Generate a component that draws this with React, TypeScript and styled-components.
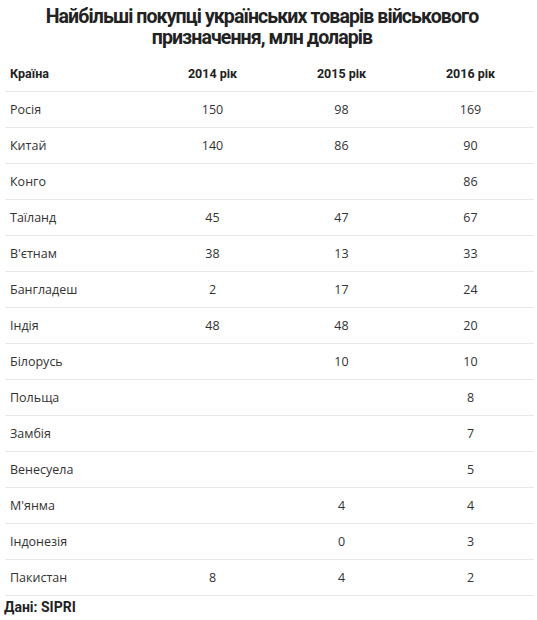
import styled, { createGlobalStyle } from "styled-components";

const GlobalStyle = createGlobalStyle`
  body {
    margin: 0;
    background: #fff;
    font-family: "Open Sans", "Noto Sans", sans-serif;
    color: #333;
  }
  * {
    box-sizing: border-box;
  }
`;

const Page = styled.div`
  width: 537px;
  padding-top: 6px;
`;

const Title = styled.h2`
  margin: 0 13px 0 0;
  font-family: Roboto, "Liberation Sans", sans-serif;
  font-size: 19.5px;
  line-height: 21px;
  font-weight: 700;
  letter-spacing: -0.9px;
  text-align: center;
  color: #222;
`;

const Table = styled.div`
  margin: 8px 0 0 5px;
  width: 529px;
`;

const Row = styled.div<{ $head?: boolean }>`
  display: grid;
  grid-template-columns: 143px repeat(3, 129px);
  height: 36px;
  align-items: center;
  border-bottom: 1px solid #e8e8e8;
  font-size: 12.5px;
  font-weight: ${(p) => (p.$head ? 700 : 400)};
  font-family: ${(p) =>
    p.$head
      ? 'Roboto, "Liberation Sans", sans-serif'
      : '"Open Sans", "Noto Sans", sans-serif'};
  color: ${(p) => (p.$head ? "#222" : "#333")};
`;

const Cell = styled.div<{ $first?: boolean }>`
  padding-left: ${(p) => (p.$first ? "5px" : "0")};
  text-align: ${(p) => (p.$first ? "left" : "center")};
`;

const Source = styled.div`
  margin: 2px 0 0 4px;
  font-family: Roboto, "Liberation Sans", sans-serif;
  font-weight: 700;
  font-size: 14px;
  line-height: 18px;
  color: #222;
`;

const rows: [string, string, string, string][] = [
  ["Росія", "150", "98", "169"],
  ["Китай", "140", "86", "90"],
  ["Конго", "", "", "86"],
  ["Таїланд", "45", "47", "67"],
  ["В'єтнам", "38", "13", "33"],
  ["Бангладеш", "2", "17", "24"],
  ["Індія", "48", "48", "20"],
  ["Білорусь", "", "10", "10"],
  ["Польща", "", "", "8"],
  ["Замбія", "", "", "7"],
  ["Венесуела", "", "", "5"],
  ["М'янма", "", "4", "4"],
  ["Індонезія", "", "0", "3"],
  ["Пакистан", "8", "4", "2"],
];

export default function App() {
  return (
    <Page>
      <GlobalStyle />
      <Title>
        Найбільші покупці українських товарів військового
        <br />
        призначення, млн доларів
      </Title>
      <Table>
        <Row $head>
          <Cell $first>Країна</Cell>
          <Cell>2014 рік</Cell>
          <Cell>2015 рік</Cell>
          <Cell>2016 рік</Cell>
        </Row>
        {rows.map((r) => (
          <Row key={r[0]}>
            <Cell $first>{r[0]}</Cell>
            <Cell>{r[1]}</Cell>
            <Cell>{r[2]}</Cell>
            <Cell>{r[3]}</Cell>
          </Row>
        ))}
      </Table>
      <Source>Дані: SIPRI</Source>
    </Page>
  );
}
